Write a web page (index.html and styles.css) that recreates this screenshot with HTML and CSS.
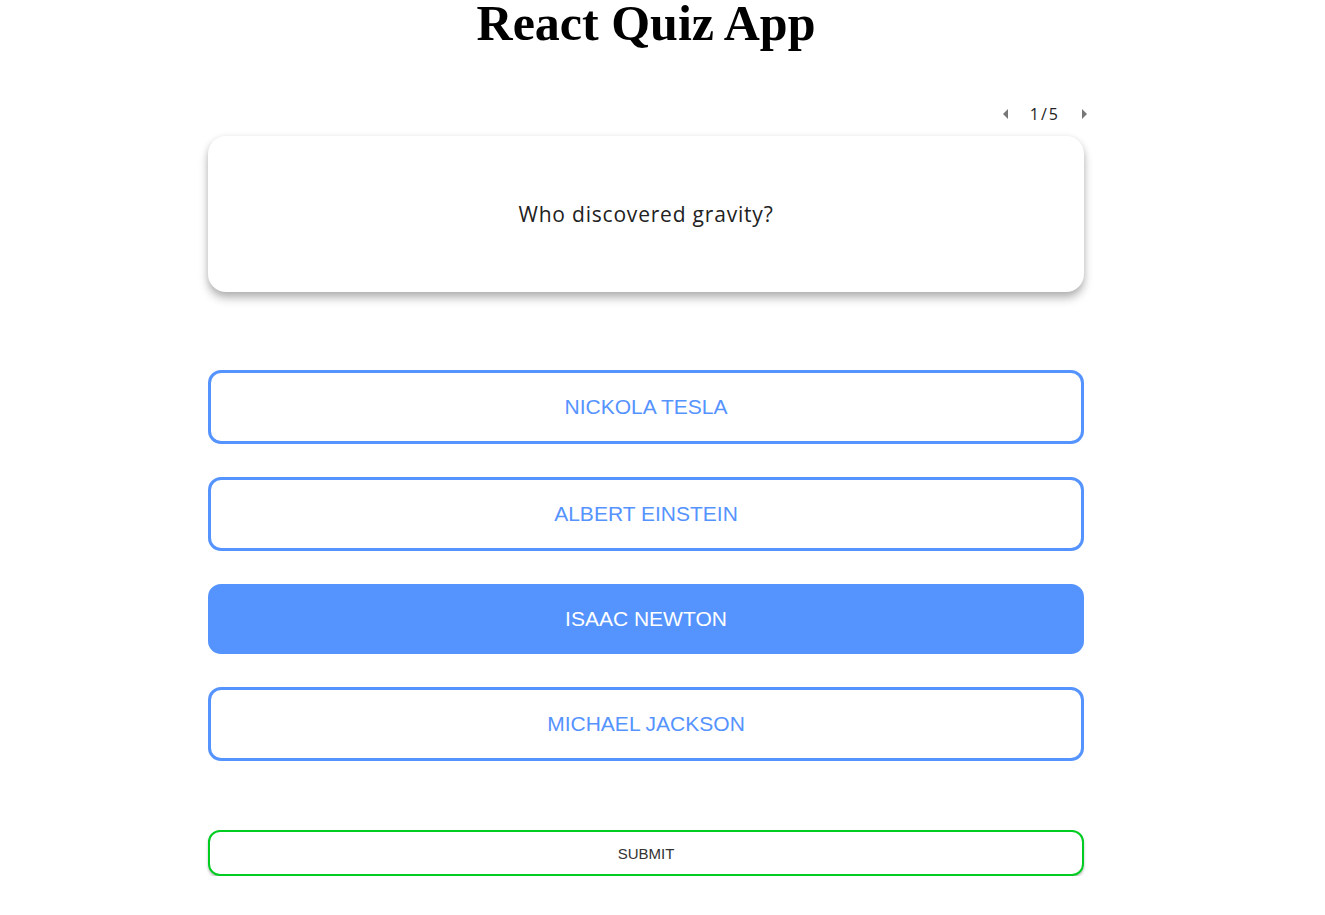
FILE: index.html
```html
<!DOCTYPE html>
<html lang="en">
<head>
<meta charset="utf-8">
<title>React Quiz App</title>
<link rel="stylesheet" href="styles.css">
</head>
<body>
<main class="app">
  <h1 class="title">React Quiz App</h1>
  <div class="pager">
    <span class="arrow arrow-left"></span>
    <span class="count">1/5</span>
    <span class="arrow arrow-right"></span>
  </div>
  <section class="question-card">
    <p class="question">Who discovered gravity?</p>
  </section>
  <div class="options">
    <button class="option">NICKOLA TESLA</button>
    <button class="option">ALBERT EINSTEIN</button>
    <button class="option selected">ISAAC NEWTON</button>
    <button class="option">MICHAEL JACKSON</button>
  </div>
  <button class="submit">SUBMIT</button>
</main>
</body>
</html>
```

FILE: styles.css
```css
html, body {
  margin: 0;
  padding: 0;
  background: #ffffff;
}
body {
  padding-right: 33px;
}
.app {
  width: 876px;
  margin: 0 auto;
  display: flex;
  flex-direction: column;
}
.title {
  margin: -7px 0 0 0;
  text-align: center;
  font-family: "Liberation Serif", "Times New Roman", serif;
  font-weight: 700;
  font-size: 50px;
  line-height: 60px;
  color: #000;
}
.pager {
  margin-top: 49px;
  margin-bottom: 10px;
  margin-right: -3px;
  display: flex;
  justify-content: flex-end;
  align-items: center;
  gap: 22px;
  height: 24px;
}
.count {
  font-family: "Open Sans", "Noto Sans", sans-serif;
  font-size: 16px;
  color: #222;
  letter-spacing: 2px;
}
.arrow {
  width: 0;
  height: 0;
  border-top: 5px solid transparent;
  border-bottom: 5px solid transparent;
}
.arrow-left {
  border-right: 5px solid #777;
}
.arrow-right {
  border-left: 5px solid #777;
}
.question-card {
  height: 156px;
  border-radius: 18px;
  background: #fff;
  box-shadow: 0 6px 10px rgba(0, 0, 0, 0.28), 0 1px 6px rgba(0, 0, 0, 0.08);
  display: flex;
  align-items: center;
  justify-content: center;
}
.question {
  margin: 0;
  font-family: "Open Sans", "Noto Sans", sans-serif;
  font-size: 21px;
  letter-spacing: 0.8px;
  color: #222;
}
.options {
  margin-top: 78px;
  display: flex;
  flex-direction: column;
  gap: 33px;
}
.option {
  height: 74px;
  border: 3px solid #5593ff;
  border-radius: 13px;
  background: #fff;
  color: #5593ff;
  font-family: "Liberation Sans", Arial, sans-serif;
  font-size: 21px;
  padding: 0;
  cursor: pointer;
}
.option.selected {
  background: #5593ff;
  color: #fff;
  height: 70px;
}
.submit {
  margin-top: 69px;
  height: 46px;
  border: 2px solid #00cc22;
  border-radius: 12px;
  background: #fff;
  color: #333;
  font-family: "Liberation Sans", Arial, sans-serif;
  font-size: 15px;
  box-shadow: 0 2px 3px rgba(0, 0, 0, 0.25);
  padding: 0;
}
```
